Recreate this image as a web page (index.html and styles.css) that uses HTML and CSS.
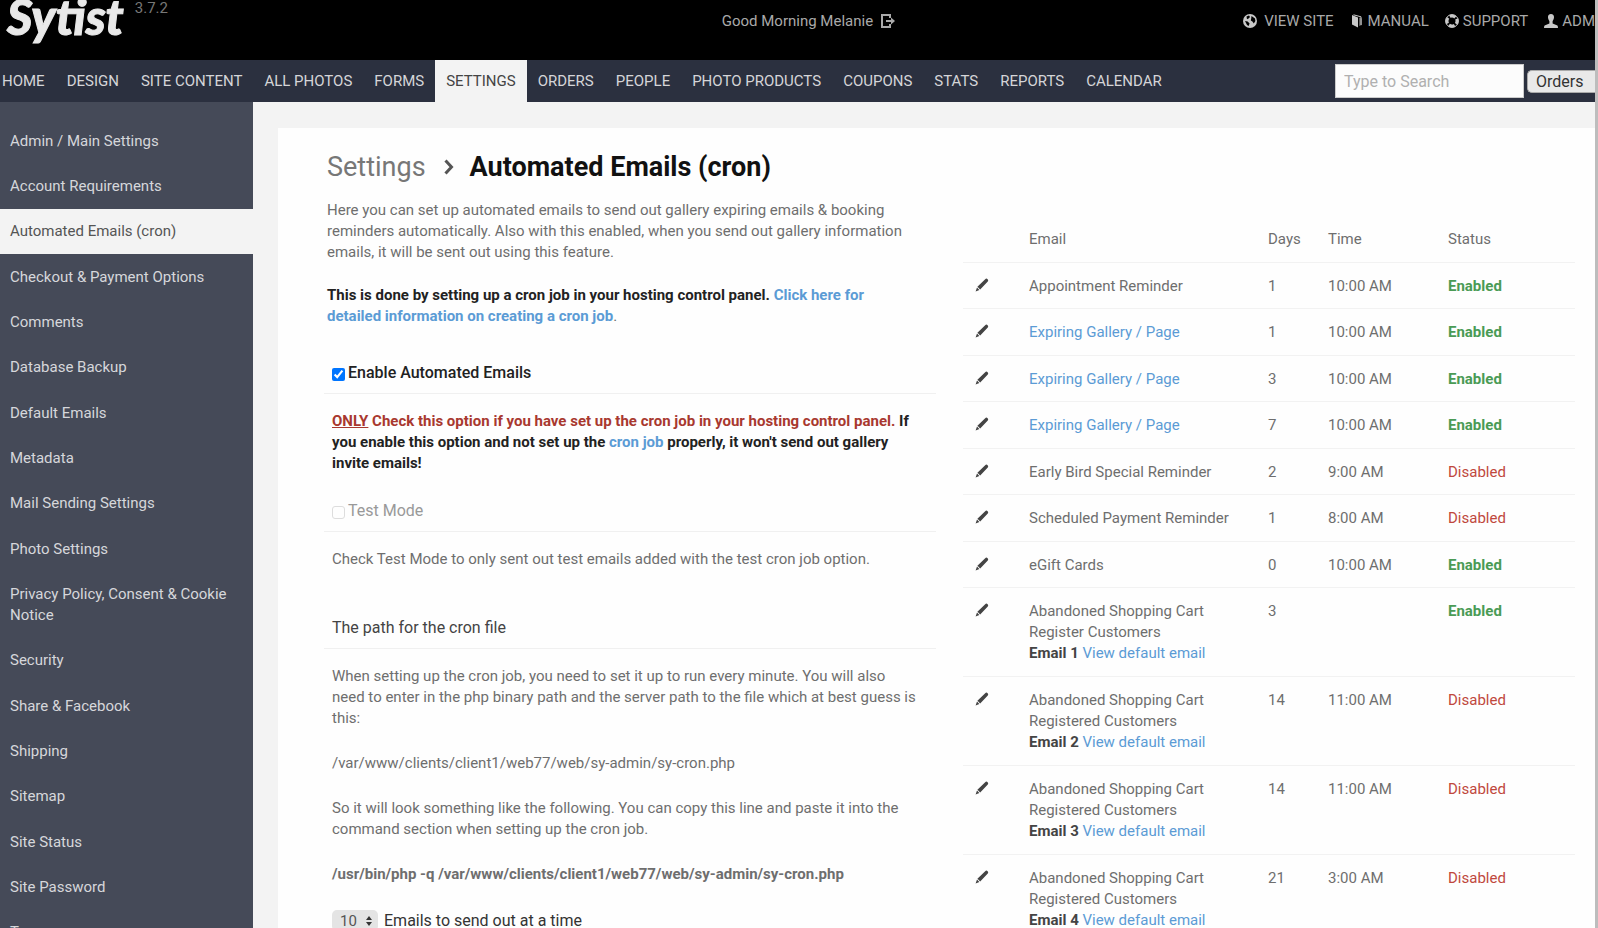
FILE: index.html
```html
<!DOCTYPE html>
<html lang="en">
<head>
<meta charset="utf-8">
<title>Sytist - Automated Emails (cron)</title>
<link rel="stylesheet" href="styles.css">
</head>
<body>
<svg class="sprite" aria-hidden="true">
  <symbol id="pencil" viewBox="0 0 14 14"><path d="M10.2 1.2 Q11.4 0 12.6 1.2 Q13.8 2.3 12.8 3.5 L5.2 11.4 L2.4 8.8 Z M2 9.6 L4.4 12 L0.6 13.4 Z"/></symbol>
</svg>
<header class="top">
  <div class="brand"><a class="logo" href="#">Sytist</a><span class="version">3.7.2</span></div>
  <a class="greeting" href="#">Good Morning Melanie
    <svg class="icon" viewBox="0 0 14 14"><path d="M9 4V1H1v12h8v-3M5 7h6" fill="none" stroke="currentColor" stroke-width="2"/><path d="M10 3.5 14 7l-4 3.5z"/></svg></a>
  <nav class="links">
    <a class="wide" href="#"><svg class="icon" viewBox="0 0 14 14"><circle cx="7" cy="7" r="7"/><path d="M3.500 2.500 6 1.600 7 3 5.600 4.600 4 5.200zM8.500 2 12 4.400 12.400 7 10.800 9.600 9.400 7.600 7.800 6.600 8.200 4.600zM2 7 4.600 7.600 6.600 9.600 5.600 12 4 11z" fill="#000"/></svg>VIEW SITE</a>
    <a href="#"><svg class="icon" viewBox="0 0 14 14"><path d="M2 1 8 3.400V13.500L2 10.500z"/><path d="M3.500.8 11 2.800V11" fill="none" stroke="currentColor"/><path d="M9 3.400 12 4.400V11L9 12z" opacity=".45"/></svg>MANUAL</a>
    <a href="#"><svg class="icon" viewBox="0 0 14 14"><circle cx="7" cy="7" r="5" fill="none" stroke="currentColor" stroke-width="3" stroke-dasharray="5.85 2" stroke-dashoffset="2.9"/><circle cx="7" cy="7" r="6.4" fill="none" stroke="currentColor"/></svg>SUPPORT</a>
    <a href="#"><svg class="icon" viewBox="0 0 14 14"><path d="M7 0C9 0 10.2 1.4 10 3.6 9.8 5.6 9 6.4 8.6 7.2V9.6L13.4 11.4Q14 12 14 14H0Q0 12 .6 11.4L5.4 9.6V7.2C5 6.4 4.2 5.6 4 3.6 3.8 1.4 5 0 7 0z"/></svg>ADM</a>
  </nav>
</header>
<div class="bar">
  <nav class="menu">
    <a href="#">HOME</a><a href="#">DESIGN</a><a href="#">SITE CONTENT</a><a href="#">ALL PHOTOS</a><a href="#">FORMS</a><a class="current" href="#">SETTINGS</a><a href="#">ORDERS</a><a href="#">PEOPLE</a><a href="#">PHOTO PRODUCTS</a><a href="#">COUPONS</a><a href="#">STATS</a><a href="#">REPORTS</a><a href="#">CALENDAR</a>
  </nav>
  <form class="search">
    <input type="text" placeholder="Type to Search" aria-label="Search">
    <select aria-label="Search in"><option>Orders</option></select>
  </form>
</div>
<div class="page">
  <nav class="side">
    <a href="#">Admin / Main Settings</a>
    <a href="#">Account Requirements</a>
    <a class="current" href="#">Automated Emails (cron)</a>
    <a href="#">Checkout &amp; Payment Options</a>
    <a href="#">Comments</a>
    <a href="#">Database Backup</a>
    <a href="#">Default Emails</a>
    <a href="#">Metadata</a>
    <a href="#">Mail Sending Settings</a>
    <a href="#">Photo Settings</a>
    <a href="#">Privacy Policy, Consent &amp; Cookie Notice</a>
    <a href="#">Security</a>
    <a href="#">Share &amp; Facebook</a>
    <a href="#">Shipping</a>
    <a href="#">Sitemap</a>
    <a href="#">Site Status</a>
    <a href="#">Site Password</a>
    <a href="#">Tax</a>
  </nav>
  <main class="card">
    <section class="config">
      <div class="intro">
        <h1><a href="#">Settings</a><svg class="chevron" viewBox="0 0 10 16"><path d="M1.500 1.500 7.500 8l-6 6.500" fill="none" stroke="currentColor" stroke-width="3"/></svg>Automated Emails (cron)</h1>
        <p>Here you can set up automated emails to send out gallery expiring emails &amp; booking reminders automatically. Also with this enabled, when you send out gallery information emails, it will be sent out using this feature.</p>
        <p><strong>This is done by setting up a cron job in your hosting control panel. <a href="#">Click here for detailed information on creating a cron job</a></strong>.</p>
      </div>
      <form>
        <div class="field"><input type="checkbox" id="enable" checked><label class="on" for="enable">Enable Automated Emails</label></div>
        <p class="note"><strong><span class="warn"><u>ONLY</u> Check this option if you have set up the cron job in your hosting control panel.</span> If you enable this option and not set up the <a href="#">cron job</a> properly, it won't send out gallery invite emails!</strong></p>
        <div class="field"><input type="checkbox" id="test"><label class="off" for="test">Test Mode</label></div>
        <p class="note last">Check Test Mode to only sent out test emails added with the test cron job option.</p>
        <h2 class="field">The path for the cron file</h2>
        <p class="note">When setting up the cron job, you need to set it up to run every minute. You will also need to enter in the php binary path and the server path to the file which at best guess is this:</p>
        <p class="note path">/var/www/clients/client1/web77/web/sy-admin/sy-cron.php</p>
        <p class="note path">So it will look something like the following. You can copy this line and paste it into the command section when setting up the cron job.</p>
        <p class="note path"><b>/usr/bin/php -q /var/www/clients/client1/web77/web/sy-admin/sy-cron.php</b></p>
        <div class="batch">
          <span class="picker"><select id="batch"><option>10</option></select><svg viewBox="0 0 6 10"><path d="M3 0 6 4H0zM3 10 0 6h6z"/></svg></span>
          <label for="batch">Emails to send out at a time</label>
        </div>
      </form>
    </section>
    <section class="list">
      <table>
        <thead><tr><th class="edit"></th><th class="name">Email</th><th class="days">Days</th><th class="time">Time</th><th>Status</th></tr></thead>
        <tbody>
          <tr><td><svg class="pen"><use href="#pencil"/></svg></td><td>Appointment Reminder</td><td>1</td><td>10:00 AM</td><td class="yes">Enabled</td></tr>
          <tr><td><svg class="pen"><use href="#pencil"/></svg></td><td><a href="#">Expiring Gallery / Page</a></td><td>1</td><td>10:00 AM</td><td class="yes">Enabled</td></tr>
          <tr><td><svg class="pen"><use href="#pencil"/></svg></td><td><a href="#">Expiring Gallery / Page</a></td><td>3</td><td>10:00 AM</td><td class="yes">Enabled</td></tr>
          <tr><td><svg class="pen"><use href="#pencil"/></svg></td><td><a href="#">Expiring Gallery / Page</a></td><td>7</td><td>10:00 AM</td><td class="yes">Enabled</td></tr>
          <tr><td><svg class="pen"><use href="#pencil"/></svg></td><td>Early Bird Special Reminder</td><td>2</td><td>9:00 AM</td><td class="no">Disabled</td></tr>
          <tr><td><svg class="pen"><use href="#pencil"/></svg></td><td>Scheduled Payment Reminder</td><td>1</td><td>8:00 AM</td><td class="no">Disabled</td></tr>
          <tr><td><svg class="pen"><use href="#pencil"/></svg></td><td>eGift Cards</td><td>0</td><td>10:00 AM</td><td class="yes">Enabled</td></tr>
          <tr class="tall"><td><svg class="pen"><use href="#pencil"/></svg></td><td>Abandoned Shopping Cart<br>Register Customers<br><b>Email 1</b> <a href="#">View default email</a></td><td>3</td><td></td><td class="yes">Enabled</td></tr>
          <tr class="tall"><td><svg class="pen"><use href="#pencil"/></svg></td><td>Abandoned Shopping Cart<br>Registered Customers<br><b>Email 2</b> <a href="#">View default email</a></td><td>14</td><td>11:00 AM</td><td class="no">Disabled</td></tr>
          <tr class="tall"><td><svg class="pen"><use href="#pencil"/></svg></td><td>Abandoned Shopping Cart<br>Registered Customers<br><b>Email 3</b> <a href="#">View default email</a></td><td>14</td><td>11:00 AM</td><td class="no">Disabled</td></tr>
          <tr class="tall"><td><svg class="pen"><use href="#pencil"/></svg></td><td>Abandoned Shopping Cart<br>Registered Customers<br><b>Email 4</b> <a href="#">View default email</a></td><td>21</td><td>3:00 AM</td><td class="no">Disabled</td></tr>
        </tbody>
      </table>
    </section>
  </main>
</div>
</body>
</html>
```
FILE: styles.css
```css
* { box-sizing: border-box; }
html { height: 100%; overflow: hidden; }
body {
  margin: 0;
  height: 100%;
  display: flex;
  flex-direction: column;
  overflow: hidden;
  border-right: 3px solid #bdbdbd;
  background: #f3f3f3;
  color: #6e6e6e;
  font: 15px/21px Roboto, sans-serif;
}
a { color: #5b9bd5; text-decoration: none; }
h1, h2, p { margin: 0; }
.sprite { display: none; }
.icon { width: 14px; height: 14px; fill: currentColor; flex: none; }

.top { display: flex; flex: none; height: 60px; background: #000; color: #a9a9a9; overflow: hidden; }
.top a { color: inherit; }
.brand { display: flex; gap: 11px; width: 45%; padding-left: 7px; }
.top .logo { color: #e9e9e9; font: italic 900 49px/32px Lato, sans-serif; -webkit-text-stroke: 1px #e9e9e9; }
.version { color: #777; line-height: 17px; }
.greeting { display: flex; align-items: center; gap: 8px; height: 42px; padding-left: 4px; }
.links { display: flex; align-items: center; gap: 16px; height: 42px; margin-left: auto; }
.links a { display: flex; align-items: center; gap: 4px; }
.links .wide { gap: 7px; }
.links .icon { color: #c8c8c8; }

.bar { display: flex; flex: none; height: 42px; background: #2b303f; overflow: hidden; }
.menu { display: flex; }
.menu a { padding: 11px 11px 10px; color: #d5d5d8; white-space: nowrap; }
.menu a:first-child { padding-left: 2px; }
.menu .current { background: #f3f3f3; color: #444; }
.search { display: flex; align-items: center; gap: 3px; margin-left: auto; }
.search input { width: 189px; height: 34px; padding: 0 8px; border: 1px solid #ccc; background: #fcfcfc; font: 16px Roboto, sans-serif; }
.search input::placeholder { color: #b0b0b0; }
.search select { appearance: none; width: 68px; height: 23px; padding: 0 8px; border: 1px solid #aaa; border-right: 0; border-radius: 5px 0 0 5px; background: #e9e9e9; color: #333; font: 16px Roboto, sans-serif; }

.page { display: flex; flex: 1; min-height: 0; }
.side { flex: none; width: 253px; padding-top: 17px; background: #454a58; }
.side a { display: block; padding: 12px 10px; color: #d6d7db; }
.side a:nth-child(3n) { margin-bottom: 1px; }
.side .current { background: #f3f3f3; color: #555; }

.card { display: grid; grid-template-columns: 1fr 1fr; gap: 27px; flex: 1; margin: 26px 0 0 25px; padding: 22px 20px 0 46px; background: #fefefe; }
.intro { padding-left: 3px; }
h1 { display: flex; align-items: center; margin-bottom: 16px; color: #111; font: 700 27px/34px Roboto, sans-serif; }
h1 a { color: #777; font-weight: 400; }
.chevron { width: 10px; height: 16px; margin: 0 16px 0 18px; color: #555; }
.intro p { padding: 0 22px 22px 0; }
strong { color: #222; }
.field { display: flex; align-items: center; padding: 9px 8px 10px; border-bottom: 1px solid #f0f0f0; }
.field input { width: 13px; height: 13px; margin: 4px 3px 0 0; }
.field label { font-size: 16px; }
.on { color: #222; font-weight: 500; }
.off { color: #999; }
#test { appearance: none; border: 1px solid #ddd; border-radius: 3px; }
.intro + form { padding-top: 4px; }
.note { padding: 17px 18px 17px 8px; }
.note.last { padding-bottom: 38px; }
.warn { color: #a8382f; }
h2.field { color: #444; font-size: 16px; font-weight: 400; }
.note.path { padding-top: 7px; }
.batch { display: flex; gap: 6px; padding: 8px 0 0 8px; color: #333; font-size: 16px; }
.picker { display: flex; align-items: center; position: relative; }
.picker select { appearance: none; width: 46px; height: 21px; padding: 0 8px; border: 0; border-radius: 5px; background: #e4e4e4; color: #555; font: 15px Roboto, sans-serif; }
.picker svg { position: absolute; right: 6px; width: 6px; height: 10px; fill: #333; }

.list { padding-top: 67px; }
table { width: 100%; border-collapse: collapse; table-layout: fixed; }
th, td { padding: 12px 0; border-bottom: 1px solid #f2f2f2; text-align: left; vertical-align: top; font-weight: 400; }
td { padding: 13px 0 11px; }
tr:nth-child(even) td, .tall td { padding-bottom: 12px; }
.edit { width: 66px; }
.name { width: 239px; }
.days { width: 60px; }
.time { width: 120px; }
.pen { display: block; width: 14px; height: 14px; margin: 2px 0 0 12px; fill: #444; }
.yes { color: #4a9b55; font-weight: 700; }
.no { color: #c0483d; }
td b { color: #444; }
```
